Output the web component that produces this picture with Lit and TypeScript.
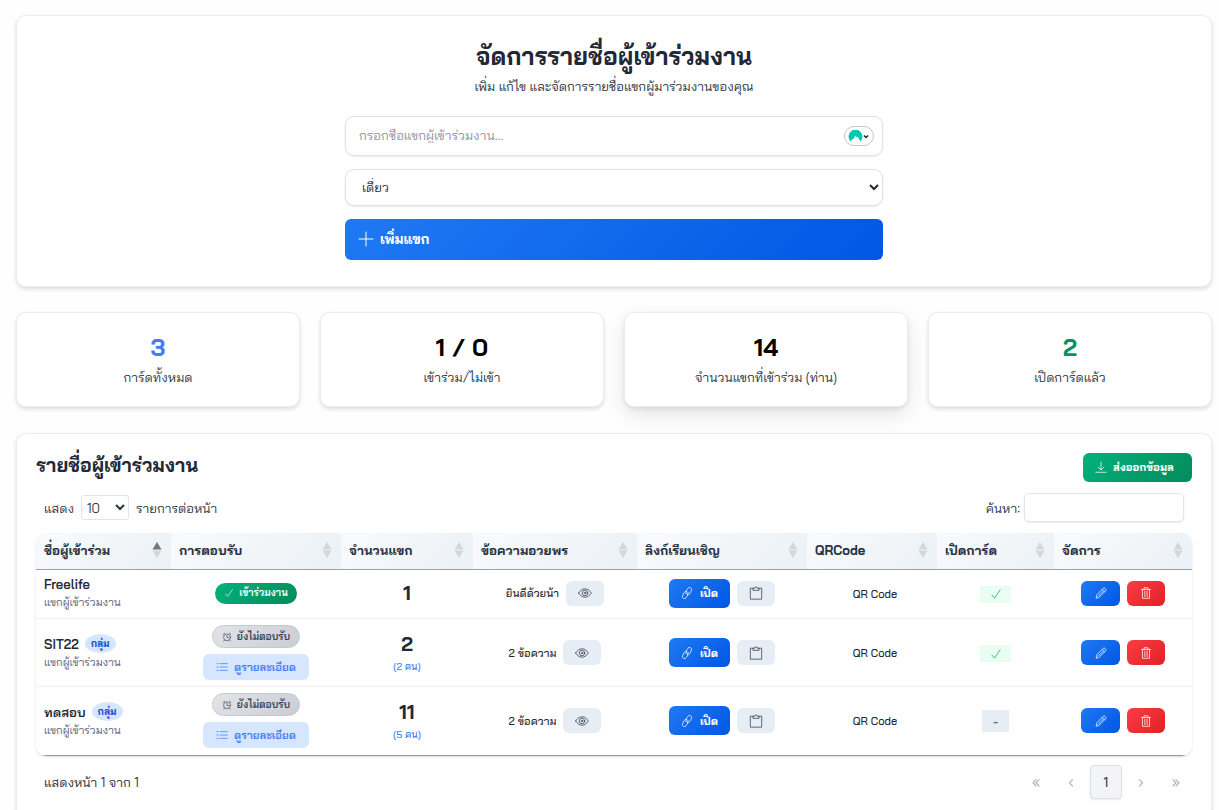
import { LitElement, html, css, svg, nothing } from "lit";
import { customElement, property } from "lit/decorators.js";
import { classMap } from "lit/directives/class-map.js";

interface Guest {
  name: string;
  group: boolean;
  accepted: boolean;
  seats: number;
  people?: number;
  message: string;
  opened: boolean;
}

const guests: Guest[] = [
  { name: "Freelife", group: false, accepted: true, seats: 1, message: "ยินดีด้วยน้า", opened: true },
  { name: "SIT22", group: true, accepted: false, seats: 2, people: 2, message: "2 ข้อความ", opened: true },
  { name: "ทดสอบ", group: true, accepted: false, seats: 11, people: 5, message: "2 ข้อความ", opened: false },
];

const columns = [
  { label: "ชื่อผู้เข้าร่วม", cls: "w-name" },
  { label: "การตอบรับ", cls: "w-reply" },
  { label: "จำนวนแขก", cls: "w-count" },
  { label: "ข้อความอวยพร", cls: "w-msg" },
  { label: "ลิงก์เรียนเชิญ", cls: "w-link" },
  { label: "QRCode", cls: "w-qr" },
  { label: "เปิดการ์ด", cls: "w-open" },
  { label: "จัดการ", cls: "w-act" },
];

const stats = [
  { value: "3", label: "การ์ดทั้งหมด", tone: "blue", raised: false },
  { value: "1 / 0", label: "เข้าร่วม/ไม่เข้า", tone: "", raised: false },
  { value: "14", label: "จำนวนแขกที่เข้าร่วม (ท่าน)", tone: "", raised: true },
  { value: "2", label: "เปิดการ์ดแล้ว", tone: "green", raised: false },
];

const glyphs: Record<string, unknown> = {
  plus: svg`<path d="M8 1v14M1 8h14"/>`,
  download: svg`<path d="M8 1.500v10M4.500 8.500 8 12l3.500-3.500M1 15h14"/>`,
  check: svg`<path d="M2.500 9.500 6 13.500 13.500 2.500"/>`,
  clock: svg`<circle cx="8" cy="8.500" r="5.500"/><path d="M8 5v4h2.800M1.800 4 4.300 1.700M14.200 4l-2.500-2.300M4 13l-1.300 1.600M12 13l1.300 1.600"/>`,
  list: svg`<path d="M5.500 3.500H15M5.500 8H15M5.500 12.500H15M1.200 3.500h1.600M1.200 8h1.600M1.200 12.500h1.600"/>`,
  eye: svg`<path d="M.8 8C2.500 5 5 3.200 8 3.200S13.500 5 15.200 8C13.500 11 11 12.800 8 12.800S2.500 11 .8 8Z"/><circle cx="8" cy="8" r="3.200"/><circle cx="8" cy="8" r="1"/>`,
  link: svg`<path d="M6.500 8.800 7.500 4.300 9 2a2.700 2.700 0 0 1 4.800 2.500L12 8.500a2.800 2.800 0 0 1-4 1.200M9.500 7.200l-1 4.500L7 14a2.700 2.700 0 0 1-4.800-2.500L4 7.500a2.800 2.800 0 0 1 4-1.200"/>`,
  clipboard: svg`<path d="M5 2.500H1.500v12.500h13V2.500H11"/><path d="M4.500 4.500v-2h2L7 1.200h2l.5 1.300h2v2Z"/>`,
  pencil: svg`<path d="m1.500 14.500 1-4.200 8.300-8.400a1.800 1.800 0 0 1 2.600 0l.7.700a1.800 1.800 0 0 1 0 2.600l-8.400 8.300ZM9.500 3.200l3.300 3.300M4.500 12l6.500-6.500"/>`,
  trash: svg`<path d="M2 3.200h12M5.500 3.200V1h5v2.200M3.300 3.200v11.900h9.400V3.200M6.500 5.500v7.500M9.500 5.500v7.500"/>`,
};

const icon = (name: string, size = 12) =>
  html`<svg class="icon" width=${size} height=${size} viewBox="0 0 16 16" aria-hidden="true">${glyphs[name]}</svg>`;

@customElement("app-root")
export class AppRoot extends LitElement {
  @property({ attribute: false }) rows: Guest[] = guests;

  static styles = css`
    :host {
      display: block;
      height: 100vh;
      overflow-y: auto;
      scrollbar-width: none;
      background: #fefefe;
      color: #1f2937;
      font-family: "Bai Jamjuree", "Noto Sans Thai", Inter, "Noto Sans", sans-serif;
      font-size: 13px;
      line-height: 18px;
    }
    * { box-sizing: border-box; }
    button, input, select { font: inherit; color: inherit; margin: 0; }
    button { border: 0; cursor: pointer; padding: 0; }
    h1, h2, p { margin: 0; }
    .icon { fill: none; stroke: currentColor; stroke-width: 1; stroke-linecap: round; stroke-linejoin: round; flex: none; }
    .page { padding: 15px 7px 26px 16px; display: flex; flex-direction: column; }
    .card { background: #fff; border: 1px solid #ededef; border-radius: 10px; box-shadow: 0 2px 4px rgba(0, 0, 0, 0.14); }

    .intro { padding: 22px 16px 26px; }
    h1 { text-align: center; font-size: 24px; line-height: 37px; font-weight: 700; }
    .lead { text-align: center; line-height: 22px; color: #283343; }
    form { max-width: 538px; margin: 19px auto 0; display: flex; flex-direction: column; gap: 13px; }
    .field { display: flex; align-items: center; height: 40px; padding: 0 8px 0 13px; border: 1px solid #dfe1e6; border-radius: 9px; box-shadow: 0 1px 2px rgba(0, 0, 0, 0.08); }
    .field input { flex: 1; min-width: 0; border: 0; outline: 0; padding: 0 0 2px; background: transparent; height: 38px; }
    .field input::placeholder { color: #8b939f; opacity: 1; }
    .vault { width: 30px; height: 20px; border: 1px solid #c4c6c8; border-radius: 10px; background: #fff; display: grid; place-items: center; }
    .type { height: 37px; padding: 0 0 1px 12px; border: 1px solid #dfe1e6; border-radius: 9px; background: #fff; box-shadow: 0 1px 2px rgba(0, 0, 0, 0.08); }
    .add { height: 41px; border-radius: 6px; padding: 0 13px 2px; display: flex; align-items: center; gap: 6px; color: #fff; font-size: 14px; font-weight: 700; background: linear-gradient(135deg, #2079f3, #0057e4); }

    .stats { display: grid; grid-template-columns: repeat(4, 1fr); gap: 20px; margin: 25px 0 26px; }
    .stat { padding: 17px 8px 16px; text-align: center; }
    .stat.raised { box-shadow: 0 8px 20px rgba(0, 0, 0, 0.1), 0 2px 4px rgba(0, 0, 0, 0.08); }
    .value { font-size: 24px; line-height: 35px; font-weight: 700; color: #000; }
    .value.blue { color: #447cf8; }
    .value.green { color: #019264; }
    .label { line-height: 25px; color: #283343; }

    .list { padding: 19px; }
    .head, .tools, .foot { display: flex; align-items: center; justify-content: space-between; }
    h2 { font-size: 19px; line-height: 25px; padding-bottom: 4px; font-weight: 700; }
    .export { display: flex; align-items: center; gap: 6px; height: 29px; width: 109px; padding: 0 12px 1px; border-radius: 6px; color: #fff; font-size: 11px; font-weight: 700; white-space: nowrap; background: linear-gradient(135deg, #02b27a, #048a5c); }
    .tools { padding: 0 8px; margin: 11px 0; height: 29px; color: #283343; }
    .per, .search { display: flex; align-items: center; gap: 7px; }
    .search { gap: 4px; }
    .per select { width: 48px; height: 25px; padding: 0 0 0 1px; border: 1px solid #e3e4e8; border-radius: 3px; background: #fff; }
    .search input { width: 160px; height: 29px; border: 1px solid #e3e4e8; border-radius: 5px; background: #fff; box-shadow: 0 1px 2px rgba(0, 0, 0, 0.08); }

    .frame { border-radius: 10px; overflow: hidden; box-shadow: 0 1px 2px rgba(0, 0, 0, 0.15); }
    table { width: 100%; table-layout: fixed; border-collapse: separate; border-spacing: 0; }
    .w-name { width: 135px; } .w-reply { width: 170px; } .w-count { width: 132px; } .w-msg { width: 164px; }
    .w-link { width: 170px; } .w-qr { width: 130px; } .w-open { width: 117px; } .w-act { width: 138px; }
    th { padding: 0 9px 2px 8px; height: 37px; text-align: left; font-weight: 700; color: #283343; background: linear-gradient(135deg, #f9fafb, #ebf1f6); border-bottom: 1px solid #9ca1a9; }
    .th { display: flex; align-items: center; justify-content: space-between; white-space: nowrap; }
    .sort { fill: #d3d7dd; flex: none; }
    .sort .on { fill: #6f7782; }
    td { padding: 6px 8px; border-bottom: 1px solid #eef0f2; text-align: center; vertical-align: middle; white-space: nowrap; }
    tr:last-child td { border-bottom-color: #999; padding-bottom: 7px; }
    tbody tr:first-child td { padding: 5px 8px 7px; }
    td:first-child { text-align: left; }
    .name { display: flex; align-items: center; gap: 6px; font-weight: 600; }
    .sub { color: #52607a; font-size: 11px; }
    .tag { border-radius: 50%; background: #d6e6fe; color: #1d4fd7; font-size: 10px; line-height: 19px; padding: 0 6px; font-weight: 700; }
    .stack { display: flex; flex-direction: column; align-items: center; gap: 6px; }
    .pill { display: flex; align-items: center; gap: 5px; height: 23px; padding: 0 9px; border-radius: 12px; font-size: 10px; font-weight: 600; color: #374151; background: linear-gradient(135deg, #e2e4e8, #cacdd4); border: 1px solid #c5c8ce; }
    .pill.yes { height: 21px; color: #fff; border: 0; background: linear-gradient(135deg, #02b27a, #048a5c); }
    .detail { display: flex; align-items: center; gap: 6px; height: 26px; padding: 0 13px; border-radius: 6px; background: #d6e6fe; color: #447cf8; font-size: 11px; font-weight: 600; }
    .num { font-size: 20px; line-height: 28px; font-weight: 700; }
    .people { color: #447cf8; font-size: 10px; font-weight: 500; }
    .row { display: flex; align-items: center; justify-content: center; gap: 7px; font-size: 11px; font-weight: 500; }
    .soft, .edit, .del { width: 38px; height: 25px; border-radius: 6px; display: grid; place-items: center; color: #4a5463; background: #e6edf4; }
    .edit { width: 39px; color: #fff; background: linear-gradient(135deg, #2079f3, #0057e4); }
    .del { color: #fff; background: linear-gradient(135deg, #fa3d42, #e02228); }
    .open { height: 29px; width: 61px; border-radius: 6px; display: flex; align-items: center; justify-content: center; gap: 7px; color: #fff; font-weight: 700; text-decoration: none; background: linear-gradient(135deg, #2079f3, #0057e4); }
    .qr { background: none; font-size: 11px; font-weight: 500; padding-left: 6px; }
    .state { display: inline-grid; place-items: center; width: 31px; height: 17px; background: #eafdf3; color: #18a75c; vertical-align: middle; }
    .state.none { width: 27px; height: 22px; background: #e6edf4; color: #64748b; font-weight: 600; }

    .foot { padding-left: 8px; margin-top: 9px; }
    nav { display: flex; gap: 3px; }
    nav button { width: 32px; height: 34px; border-radius: 4px; background: none; color: #a3a8b0; font-size: 15px; }
    nav .current { background: #f3f4f6; border: 1px solid #dcdfe3; color: #374151; font-size: 13px; font-weight: 500; box-shadow: 0 1px 2px rgba(0, 0, 0, 0.08); }
  `;

  private renderRow(g: Guest) {
    return html`<tr>
      <td>
        <div class="name">${g.name}${g.group ? html`<span class="tag">กลุ่ม</span>` : nothing}</div>
        <div class="sub">แขกผู้เข้าร่วมงาน</div>
      </td>
      <td>
        <div class="stack">
          ${g.accepted
            ? html`<span class="pill yes">${icon("check", 10)}เข้าร่วมงาน</span>`
            : html`<span class="pill">${icon("clock", 10)}ยังไม่ตอบรับ</span>
                <button class="detail">${icon("list")}ดูรายละเอียด</button>`}
        </div>
      </td>
      <td>
        <div class="num">${g.seats}</div>
        ${g.people ? html`<div class="people">(${g.people} คน)</div>` : nothing}
      </td>
      <td><div class="row">${g.message}<button class="soft" aria-label="ดูข้อความ">${icon("eye", 14)}</button></div></td>
      <td>
        <div class="row">
          <a class="open" href="#">${icon("link")}เปิด</a>
          <button class="soft" aria-label="คัดลอก">${icon("clipboard", 14)}</button>
        </div>
      </td>
      <td><button class="qr">QR Code</button></td>
      <td>${g.opened ? html`<span class="state">${icon("check")}</span>` : html`<span class="state none">-</span>`}</td>
      <td>
        <div class="row">
          <button class="edit" aria-label="แก้ไข">${icon("pencil")}</button>
          <button class="del" aria-label="ลบ">${icon("trash")}</button>
        </div>
      </td>
    </tr>`;
  }

  render() {
    return html`<main class="page">
      <section class="card intro">
        <h1>จัดการรายชื่อผู้เข้าร่วมงาน</h1>
        <p class="lead">เพิ่ม แก้ไข และจัดการรายชื่อแขกผู้มาร่วมงานของคุณ</p>
        <form @submit=${(e: Event) => e.preventDefault()}>
          <div class="field">
            <input type="text" aria-label="ชื่อแขก" placeholder="กรอกชื่อแขกผู้เข้าร่วมงาน..." />
            <button type="button" class="vault" aria-label="เติมอัตโนมัติ">
              <svg width="22" height="12" viewBox="0 0 22 12" aria-hidden="true">
                <path fill="#00c9b0" d="M2.500 11.500A7 7 0 1 1 12.500 11.500L9.500 6.500 8.700 7.500 7.500 5.500 5 9.500 4.500 9Z" />
                <path fill="none" stroke="#222" stroke-width="1.500" d="m16 5.500 2 2 2-2" />
              </svg>
            </button>
          </div>
          <select class="type" aria-label="ประเภทแขก"><option>เดี่ยว</option><option>กลุ่ม</option></select>
          <button class="add">${icon("plus", 16)}เพิ่มแขก</button>
        </form>
      </section>

      <section class="stats">
        ${stats.map(
          (s) => html`<div class=${classMap({ card: true, stat: true, raised: s.raised })}>
            <div class="value ${s.tone}">${s.value}</div>
            <div class="label">${s.label}</div>
          </div>`
        )}
      </section>

      <section class="card list">
        <div class="head">
          <h2>รายชื่อผู้เข้าร่วมงาน</h2>
          <button class="export">${icon("download")}ส่งออกข้อมูล</button>
        </div>
        <div class="tools">
          <label class="per">แสดง <select><option>10</option><option>25</option></select> รายการต่อหน้า</label>
          <label class="search">ค้นหา: <input type="search" /></label>
        </div>
        <div class="frame">
          <table>
            <thead>
              <tr>
                ${columns.map(
                  (c, i) => html`<th class=${c.cls} scope="col"><div class="th">${c.label}
                    <svg class="sort" width="10" height="16" viewBox="0 0 10 16" aria-hidden="true">
                      <path class=${i === 0 ? "on" : ""} d="M5 0 9.500 7.500h-9Z" /><path d="M5 16 .5 8.500h9Z" />
                    </svg></div></th>`
                )}
              </tr>
            </thead>
            <tbody>${this.rows.map((g) => this.renderRow(g))}</tbody>
          </table>
        </div>
        <div class="foot">
          <span>แสดงหน้า 1 จาก 1</span>
          <nav aria-label="เลือกหน้า">
            <button>«</button><button>‹</button><button class="current">1</button><button>›</button><button>»</button>
          </nav>
        </div>
      </section>
    </main>`;
  }
}
